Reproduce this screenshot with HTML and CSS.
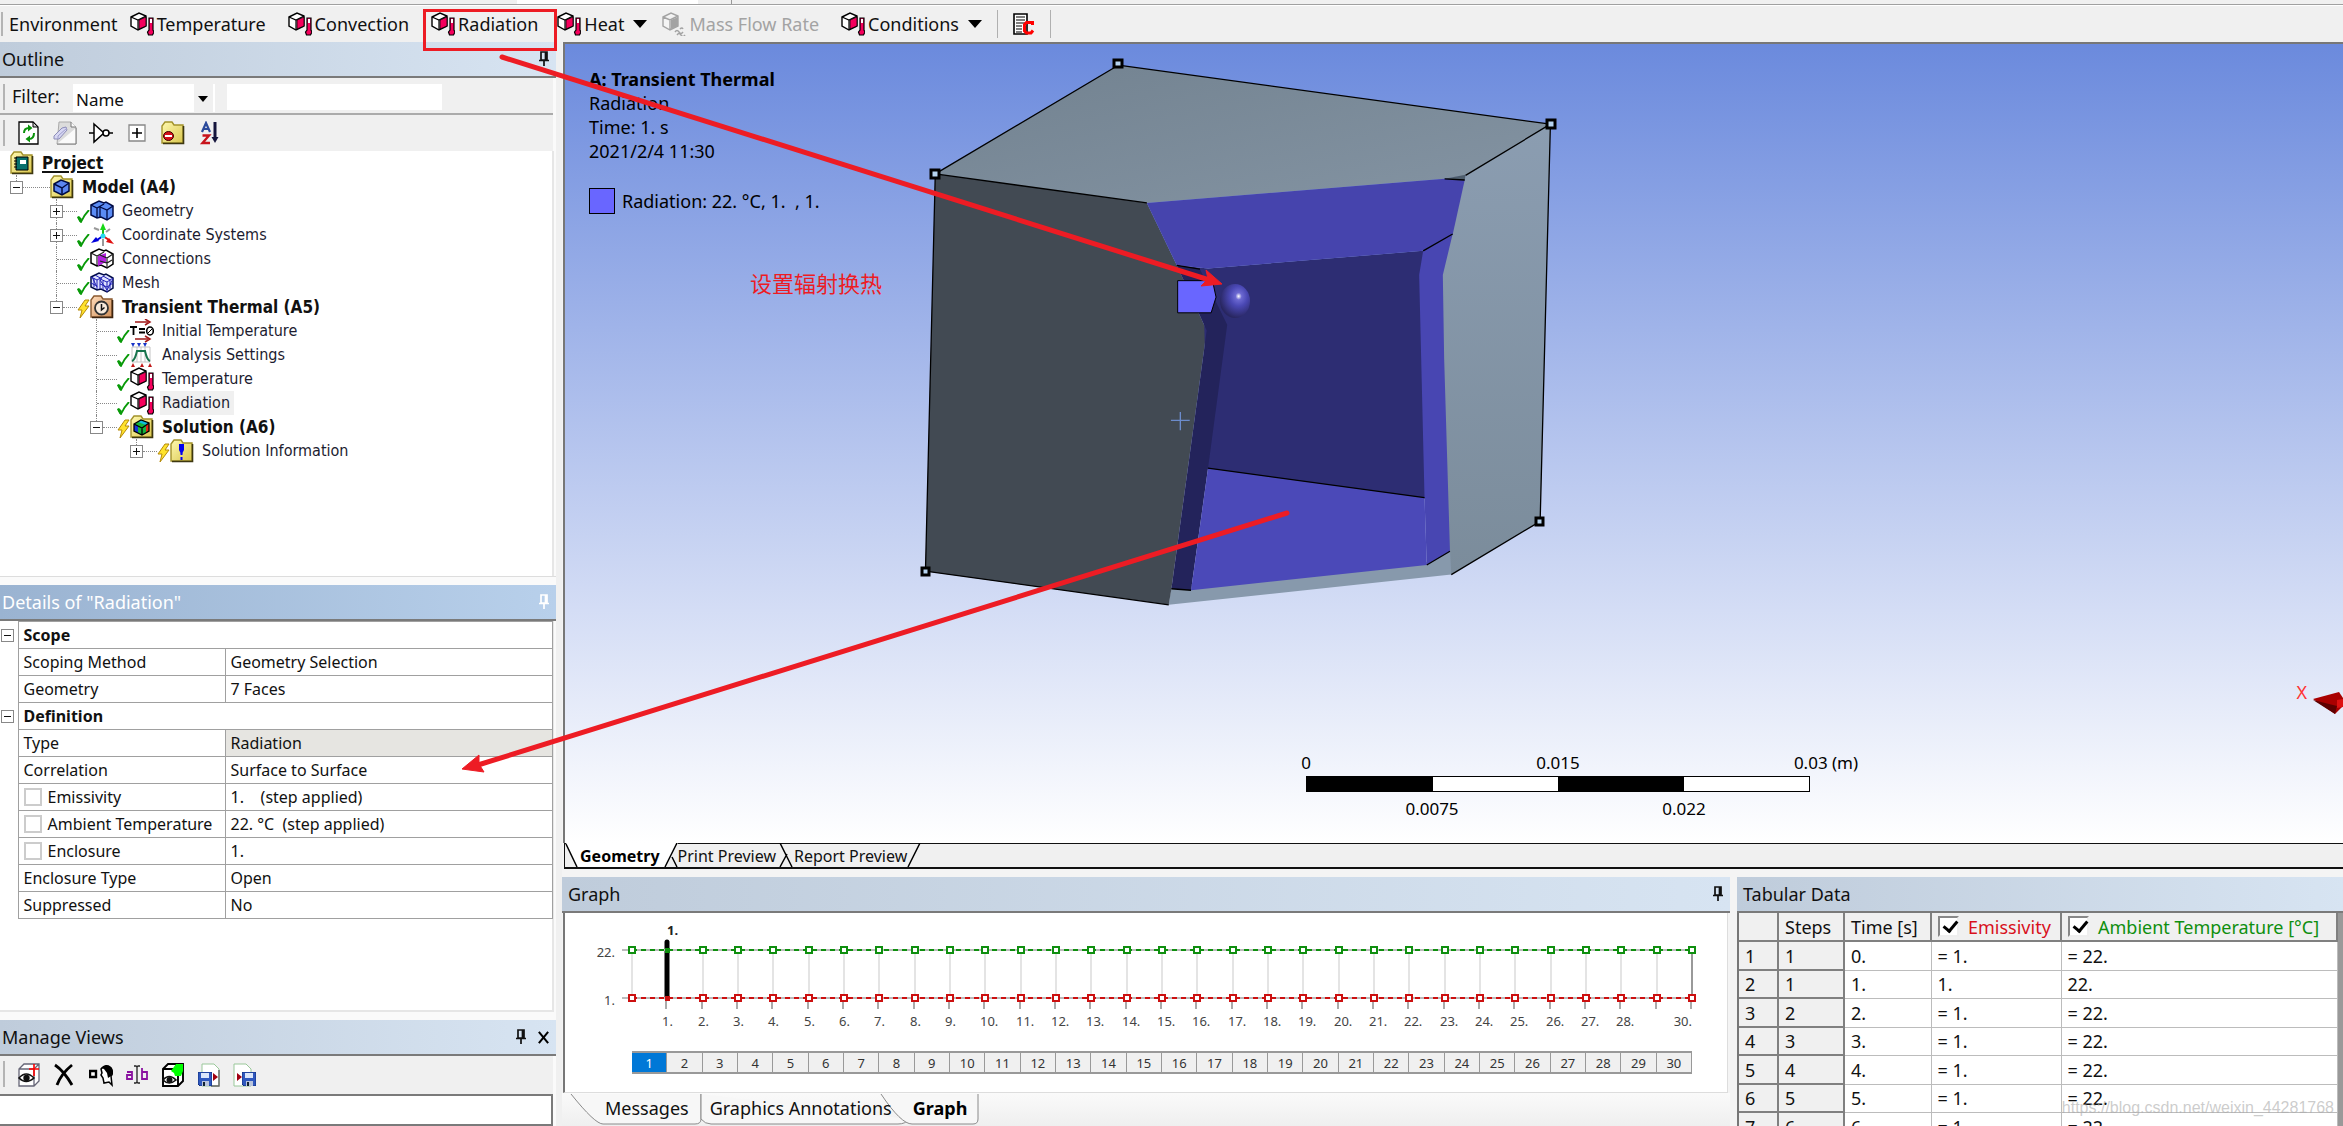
FILE: index.html
```html
<!DOCTYPE html>
<html lang="en">
<head>
<meta charset="utf-8">
<title>Transient Thermal - Mechanical</title>
<link rel="stylesheet" href="styles.css">
</head>
<body>
<svg class="defs" aria-hidden="true">
  <defs>
    <linearGradient id="folderFill" x1="0" y1="0" x2="1" y2="1"><stop offset="0" stop-color="#fff9b0"/><stop offset="1" stop-color="#d9c64e"/></linearGradient>
    <linearGradient id="brownFill" x1="0" y1="0" x2="1" y2="1"><stop offset="0" stop-color="#ffdcbc"/><stop offset="1" stop-color="#d08f58"/></linearGradient>
    <radialGradient id="ball" cx=".62" cy=".36" r=".65"><stop offset="0" stop-color="#fff"/><stop offset=".16" stop-color="#6c69d2"/><stop offset=".45" stop-color="#4a48b4"/><stop offset="1" stop-color="#28265f"/></radialGradient>
    <linearGradient id="topFace" x1="0" y1="0" x2="1" y2="1"><stop offset="0" stop-color="#728290"/><stop offset="1" stop-color="#8494a3"/></linearGradient>
    <linearGradient id="sideFace" x1="0" y1="0" x2="0" y2="1"><stop offset="0" stop-color="#8b9db1"/><stop offset="1" stop-color="#7b8c9b"/></linearGradient>
  </defs>
  <symbol id="thermo" viewBox="0 0 24 24">
    <path d="M1 5 9 1l7 3v10l-8 4-7-4z" fill="#fff" stroke="#000" stroke-width="1.4"/>
    <path d="M1 5l7 3 8-4M8 8v10" fill="none" stroke="#000" stroke-width="1.2"/>
    <path d="M9 8l7-3v9l-7 3z" fill="#f5005c" stroke="#000" stroke-width=".8"/>
    <path d="M19 6h4v12l1 2-1.500 3h-4L17.500 20 19 18z" fill="#f5005c" stroke="#000" stroke-width="1.200"/>
    <path d="M20 7h2v4h-2z" fill="#fff"/>
  </symbol>
  <symbol id="flow" viewBox="0 0 24 24">
    <path d="M1 5 9 1l7 3v10l-8 4-7-4zM1 5l7 3 8-4M8 8v10" fill="#f4f4f4" stroke="#a3a3a3" stroke-width="1.400"/>
    <path d="M9 8l7-3v9l-7 3z" fill="#a3a3a3"/>
    <path d="M13 20q2-3 4 0t4 0M15 23q2-3 4 0t4 0M18 17q2-2 3 0" fill="none" stroke="#a3a3a3" stroke-width="1.400"/>
  </symbol>
  <symbol id="report" viewBox="0 0 24 24">
    <path d="M2 2h13v20H2z" fill="#fff" stroke="#000" stroke-width="1.600"/>
    <path d="M4 5h9M4 8h9M4 11h9M4 14h6M4 17h6M4 20h6" stroke="#000" stroke-width="1.200"/>
    <path d="M20.500 13v-2.500h-6l-2 2V19l2 2h4.500l2-2.500" fill="none" stroke="#f00" stroke-width="3"/>
  </symbol>
  <symbol id="pin" viewBox="0 0 12 16">
    <path d="M3 1h6v8H3zM7.500 1v8M1 9.500h10M6 10v5" fill="none" stroke="currentColor" stroke-width="1.700"/>
  </symbol>
  <symbol id="cross" viewBox="0 0 14 14"><path d="M2 1l10 12M12 1 2 13" stroke="#000" stroke-width="2.200"/></symbol>
  <symbol id="refresh" viewBox="0 0 24 24">
    <path d="M2 1h14l5 5v17H2z" fill="#fff" stroke="#000" stroke-width="1.300"/><path d="M16 1v5h5z" fill="#ccc" stroke="#000"/>
    <path d="M7 12q0-5 5-5M17 12q0 6-5 6" fill="none" stroke="#0a930a" stroke-width="2"/>
    <path d="M11 3.500 15.500 7 11 10.500zM13 14.500 8.500 18l4.500 3.500z" fill="#0a930a"/>
  </symbol>
  <symbol id="eraser" viewBox="0 0 24 24">
    <path d="M6 1h12l5 5v17H4z" fill="#dcdcdc" stroke="#aaa"/><path d="M18 1v5h5M4 23h19V7" fill="#fafafa" stroke="#777"/>
    <path d="M1 15 9 7l4-1 1 3-8 9H1z" fill="#d7d7f3" stroke="#8c8cb8"/><path d="M5 18v-3L14 7" fill="none" stroke="#9d9dcc"/>
  </symbol>
  <symbol id="gate" viewBox="0 0 24 24">
    <path d="M0 12h5M5 3l10 9-10 9zM20 12h4" fill="#fff" stroke="#000" stroke-width="1.500"/><circle cx="17" cy="12" r="3" fill="#fff" stroke="#000" stroke-width="1.500"/>
  </symbol>
  <symbol id="expand" viewBox="0 0 24 24"><path d="M4 4h16v16H4z" fill="#fff" stroke="#888" stroke-width="1.300"/><path d="M7 12h10M12 7v10" stroke="#000" stroke-width="1.600"/></symbol>
  <symbol id="folder" viewBox="0 0 24 24">
    <path d="M1 22V5l3-4h7l2 3h9v18z" fill="url(#folderFill)" stroke="#a3922b" stroke-width="1.400"/><path d="M2 22.500h20.500V5" fill="none" stroke="#3d3710" stroke-width="1.600"/>
  </symbol>
  <symbol id="hidden" viewBox="0 0 24 24"><use href="#folder"/><ellipse cx="7.500" cy="15" rx="5" ry="4.500" fill="#d31018" stroke="#3a0000"/><path d="M4 15h7" stroke="#fff" stroke-width="2"/></symbol>
  <symbol id="sort" viewBox="0 0 24 24">
    <path d="M5 11 9 2l4 9M6.500 8h5" fill="none" stroke="#2b4a9b" stroke-width="2.200"/><path d="M5.500 14.500H12l-6.500 7.500H13" fill="none" stroke="#c8141c" stroke-width="2.400"/>
    <path d="M18 1v17" stroke="#15153c" stroke-width="3"/><path d="M14.500 16h7L18 22z" fill="#15153c"/>
  </symbol>
  <symbol id="project" viewBox="0 0 24 24"><use href="#folder"/><path d="M6 6h12v13H6z" fill="#08706c" stroke="#000"/><path d="M10 9h6v4h-6z" fill="#fff"/><path d="M4 7h3M4 10h3M4 13h3M4 16h3" stroke="#000"/></symbol>
  <symbol id="cube" viewBox="0 0 24 24"><path d="M4 9l7-4 8 3v8l-7 4-8-4z" fill="#5c86f0" stroke="#000c42" stroke-width="1.500"/><path d="M4 9l8 4 7-5M12 13v7" fill="none" stroke="#000c42" stroke-width="1.500"/></symbol>
  <symbol id="model" viewBox="0 0 24 24"><use href="#folder"/><use href="#cube"/></symbol>
  <symbol id="geometry" viewBox="0 0 24 24">
    <path d="M1 6 9 2l5 2 2-1 7 4v10l-6 4-6-3-4 1-6-3z" fill="#5b8cf5" stroke="#000b45" stroke-width="1.500"/>
    <path d="M1 6l6 3 7-4M7 9v9M10 8l7 3 6-4M17 11v10M10 8v10" fill="none" stroke="#000b45" stroke-width="1.300"/>
  </symbol>
  <symbol id="connections" viewBox="0 0 24 24">
    <path d="M1 6 9 2l5 2 2-1 7 4v10l-6 4-6-3-4 1-6-3z" fill="#fff" stroke="#000" stroke-width="1.500"/>
    <path d="M8 9l8-3v9l-8 4z" fill="#b422e0"/><path d="M1 6l6 3 7-4M7 9v9M10 8l7 3 6-4M17 11v10M10 14l7 2 5-3" fill="none" stroke="#222" stroke-width="1.200"/>
  </symbol>
  <symbol id="mesh" viewBox="0 0 24 24">
    <path d="M1 6 9 2l5 2 2-1 7 4v10l-6 4-6-3-4 1-6-3z" fill="#dfe2ff" stroke="#000b45" stroke-width="1.500"/>
    <path d="M1 6l6 3 7-4M7 9v9M10 8l7 3 6-4M17 11v10M10 8v10M1 12l6 3M4 7v9M2 6l5 10M10 9l7 10M23 8l-6 11M13 10v9M20 9v9M10 13l7 3 6-4M5 4l7 4M13 5l7 4" fill="none" stroke="#2020b4"/>
  </symbol>
  <symbol id="axes" viewBox="0 0 24 24">
    <path d="M4 5l5 2M20 6l-4 3M13 16v7" stroke="#999" stroke-width="2"/><path d="M13 14V5" stroke="#18c018" stroke-width="2"/><path d="M13 0l3 7h-6z" fill="#18d818"/>
    <path d="M13 13l-6 4" stroke="#0000dc" stroke-width="2"/><path d="M1 20l5-6 3 4z" fill="#0000dc"/><path d="M13 13l6 4" stroke="#e01010" stroke-width="2"/><path d="M24 21l-8-2 3-4z" fill="#e01010"/><circle cx="13" cy="13" r="2.500" fill="#29d8ee"/>
  </symbol>
  <symbol id="clock" viewBox="0 0 24 24"><path d="M1 22V5l3-4h7l2 3h9v18z" fill="url(#brownFill)" stroke="#8a5a30" stroke-width="1.400"/><path d="M2 22.500h20.500V5" fill="none" stroke="#3d2410" stroke-width="1.600"/><circle cx="11.500" cy="13" r="6.500" fill="#f8eadc" stroke="#333" stroke-width="1.800"/><path d="M11.500 9v6l3-2.500" fill="none" stroke="#111" stroke-width="1.500"/></symbol>
  <symbol id="initial" viewBox="0 0 24 24">
    <path d="M5 3h13M5 20h13" stroke="#a01818" stroke-width="1.500"/><path d="M15 0l5 3-5 3M15 17l5 3-5 3" fill="none" stroke="#a01818" stroke-width="1.500"/>
    <path d="M0 8h7M3.500 8v8M9 10h6M9 13.500h6" stroke="#000" stroke-width="1.800"/><ellipse cx="20" cy="12" rx="3.300" ry="4" fill="none" stroke="#000" stroke-width="1.600"/><path d="M17 15l6-6" stroke="#000"/>
  </symbol>
  <symbol id="settings" viewBox="0 0 24 24">
    <path d="M2 4h18v15H2zM7 4v15M11 4v15M15 4v15" fill="#fff" stroke="#c4c4c4"/><path d="M2 18Q5 17 7 8h8q2 9 5 10" fill="none" stroke="#18744d" stroke-width="2"/>
    <path d="M1 0h4L3 4zM7 0h4L9 4zM13 0h4l-2 4z" fill="#1834c8"/><path d="M1 24h4l-2-4zM10 24h4l-2-4zM18 24h4l-2-4z" fill="#c01818"/>
  </symbol>
  <symbol id="solution" viewBox="0 0 24 24"><use href="#folder"/><path d="M4 9l7-4 8 3v8l-7 4-8-4z" fill="#14b43c"/><path d="M4 9l4 2v7l-4-2z" fill="#1234dc"/><path d="M8 7l3-2 8 3-3 2z" fill="#11bce0"/><path d="M16 10l3-2v8l-3 2z" fill="#e02414"/><path d="M4 9l7-4 8 3v8l-7 4-8-4zM4 9l8 4 7-5M12 13v7" fill="none" stroke="#000" stroke-width="1.300"/></symbol>
  <symbol id="info" viewBox="0 0 24 24"><use href="#folder"/><path d="M9 5h5v6l-2 4h-1l-2-4z" fill="#0000f0"/><path d="M11.500 14v2M11.500 18v3" stroke="#0000f0" stroke-width="2"/></symbol>
  <symbol id="check" viewBox="0 0 13 13"><path d="M1 7l2 4 1 1Q7 5 12 0" fill="none" stroke="#089a08" stroke-width="1.800"/><path d="M0 7l2-1 3 3-1 3H3z" fill="#089a08"/></symbol>
  <symbol id="bolt" viewBox="0 0 13 20"><path d="M8 1h4L8 7h4L3 19l2-8H1z" fill="#ffe32c" stroke="#b58a0a"/></symbol>
  <symbol id="eye" viewBox="0 0 24 24"><path d="M2 6l5-5h15v17l-5 5H2zM2 6h15v17M17 6l5-5" fill="#fff" stroke="#667" stroke-width="1.300"/><path d="M2 15q7-8 15 0-8 7-15 0z" fill="#fff" stroke="#111" stroke-width="1.600"/><circle cx="9.500" cy="15" r="3.200" fill="#111"/><path d="M17 1v12M12 6h10" stroke="#f00" stroke-width="1.600"/></symbol>
  <symbol id="remove" viewBox="0 0 24 24"><path d="M2 2q9 6 17 20M19 2Q8 11 4 22" fill="none" stroke="#000" stroke-width="2.800"/></symbol>
  <symbol id="face" viewBox="0 0 24 24"><path d="M1 8h6v6H1z" fill="#fff" stroke="#000" stroke-width="2.400"/><path d="M12 6q5-6 10-1 3 5 0 8l1 9-3-3-5 1-1-5-2-3 1-2z" fill="#fff" stroke="#000" stroke-width="1.500"/><path d="M12 5q5-5 10-1 3 4 0 9l-3 2-1-5-3-4z" fill="#000"/></symbol>
  <symbol id="rename" viewBox="0 0 24 24"><g fill="none" stroke="#8a12a0" stroke-width="1.800"><path d="M2 9h5v7H2v-4h5M17 5v11h5V9h-5"/></g><path d="M9 3h2q1 0 1 2v13q0 2-1 2H9M15 3h-2q-1 0-1 2v13q0 2 1 2h2" fill="none" stroke="#222" stroke-width="1.300"/></symbol>
  <symbol id="apply" viewBox="0 0 24 24"><path d="M2 6l5-5h15v17l-5 5H2zM2 6h15v17M17 6l5-5" fill="#fff" stroke="#000" stroke-width="1.900"/><path d="M2 17q6-7 13 0-7 6-13 0z" fill="#fff" stroke="#111" stroke-width="1.600"/><circle cx="8.500" cy="17" r="3" fill="#111"/><path d="M10 8l5-7h7v7l-2 5h-6l-1-3z" fill="#0f0"/></symbol>
  <symbol id="disk" viewBox="0 0 14 14"><path d="M0 0h14v14H2l-2-2z" fill="#2f58be" stroke="#123080"/><path d="M3 1h8v5H3z" fill="#dbe6fa"/><path d="M4 9h7v5H4z" fill="#b9c4dc"/><path d="M5 10h2v4H5z" fill="#123"/></symbol>
  <symbol id="export" viewBox="0 0 24 24"><path d="M5 1h12l5 5v17H5z" fill="#fff" stroke="#9ac89a"/><path d="M22 7v16h-8" fill="none" stroke="#666" stroke-width="1.400"/><use href="#disk" x="1" y="9" width="14" height="14"/><path d="M16 10l5 4-5 4z" fill="#a00010"/></symbol>
  <symbol id="import" viewBox="0 0 24 24"><path d="M1 1h12l5 5v17H1z" fill="#fff" stroke="#9ac89a"/><use href="#disk" x="9" y="9" width="14" height="14"/><path d="M4 10l5 4-5 4z" fill="#a00010"/></symbol>
</svg>

<div class="app">
  <div class="strip"><span class="strip-field"></span><span class="strip-end"></span></div>
  <header class="toolbar">
    <span class="toolbar-title">Environment</span>
    <button class="tool"><svg class="icon"><use href="#thermo"/></svg>Temperature</button>
    <button class="tool"><svg class="icon"><use href="#thermo"/></svg>Convection</button>
    <button class="tool tool-tight"><svg class="icon"><use href="#thermo"/></svg>Radiation</button>
    <button class="tool tool-menu"><svg class="icon"><use href="#thermo"/></svg>Heat<span class="caret"></span></button>
    <button class="tool" disabled><svg class="icon"><use href="#flow"/></svg>Mass Flow Rate</button>
    <button class="tool tool-menu"><svg class="icon"><use href="#thermo"/></svg>Conditions<span class="caret"></span></button>
    <span class="tool-group"><button class="icon-button" aria-label="Commands"><svg class="icon"><use href="#report"/></svg></button></span>
  </header>

  <div class="workspace">
    <aside class="sidebar">
      <section class="outline">
        <h2 class="pane-title">Outline<span class="pane-tools"><button class="icon-button" aria-label="Pin outline"><svg class="pin"><use href="#pin"/></svg></button></span></h2>
        <div class="filter">
          <label for="filter-kind">Filter:</label>
          <span class="select-wrap"><select id="filter-kind"><option>Name</option></select></span>
          <input class="filter-text" type="text" aria-label="Filter text">
        </div>
        <div class="mini-toolbar">
          <button class="icon-button" aria-label="Refresh"><svg class="icon"><use href="#refresh"/></svg></button>
          <button class="icon-button" aria-label="Clear"><svg class="icon"><use href="#eraser"/></svg></button>
          <button class="icon-button" aria-label="Connect"><svg class="icon"><use href="#gate"/></svg></button>
          <button class="icon-button" aria-label="Expand all"><svg class="icon"><use href="#expand"/></svg></button>
          <button class="icon-button" aria-label="Hide folders"><svg class="icon"><use href="#hidden"/></svg></button>
          <button class="icon-button" aria-label="Sort"><svg class="icon"><use href="#sort"/></svg></button>
        </div>
        <div class="tree">
          <div class="row root"><svg class="icon"><use href="#project"/></svg><span class="name strong underlined">Project</span></div>
          <ul>
            <li><div class="row"><span class="lane"><button class="toggle minus" aria-label="Collapse"></button><i class="dots"></i></span><svg class="icon"><use href="#model"/></svg><span class="name strong">Model (A4)</span></div>
              <ul>
                <li><div class="row"><span class="lane"><button class="toggle" aria-label="Expand"></button><i class="dots"></i><svg class="check"><use href="#check"/></svg></span><svg class="icon"><use href="#geometry"/></svg><span class="name">Geometry</span></div></li>
                <li><div class="row"><span class="lane"><button class="toggle" aria-label="Expand"></button><i class="dots"></i><svg class="check"><use href="#check"/></svg></span><svg class="icon"><use href="#axes"/></svg><span class="name">Coordinate Systems</span></div></li>
                <li><div class="row"><span class="lane leaf"><i class="dots"></i><svg class="check"><use href="#check"/></svg></span><svg class="icon"><use href="#connections"/></svg><span class="name">Connections</span></div></li>
                <li><div class="row"><span class="lane leaf"><i class="dots"></i><svg class="check"><use href="#check"/></svg></span><svg class="icon"><use href="#mesh"/></svg><span class="name">Mesh</span></div></li>
                <li><div class="row"><span class="lane"><button class="toggle minus" aria-label="Collapse"></button><i class="dots"></i><svg class="bolt"><use href="#bolt"/></svg></span><svg class="icon"><use href="#clock"/></svg><span class="name strong">Transient Thermal (A5)</span></div>
                  <ul>
                    <li><div class="row"><span class="lane leaf"><i class="dots"></i><svg class="check"><use href="#check"/></svg></span><svg class="icon"><use href="#initial"/></svg><span class="name">Initial Temperature</span></div></li>
                    <li><div class="row"><span class="lane leaf"><i class="dots"></i><svg class="check"><use href="#check"/></svg></span><svg class="icon"><use href="#settings"/></svg><span class="name">Analysis Settings</span></div></li>
                    <li><div class="row"><span class="lane leaf"><i class="dots"></i><svg class="check"><use href="#check"/></svg></span><svg class="icon"><use href="#thermo"/></svg><span class="name">Temperature</span></div></li>
                    <li><div class="row"><span class="lane leaf"><i class="dots"></i><svg class="check"><use href="#check"/></svg></span><svg class="icon"><use href="#thermo"/></svg><span class="name selected">Radiation</span></div></li>
                    <li><div class="row"><span class="lane"><button class="toggle minus" aria-label="Collapse"></button><i class="dots"></i><svg class="bolt"><use href="#bolt"/></svg></span><svg class="icon"><use href="#solution"/></svg><span class="name strong">Solution (A6)</span></div>
                      <ul>
                        <li><div class="row"><span class="lane"><button class="toggle" aria-label="Expand"></button><i class="dots"></i><svg class="bolt"><use href="#bolt"/></svg></span><svg class="icon"><use href="#info"/></svg><span class="name">Solution Information</span></div></li>
                      </ul>
                    </li>
                  </ul>
                </li>
              </ul>
            </li>
          </ul>
        </div>
      </section>

      <section class="details">
        <h2 class="pane-title active">Details of "Radiation"<span class="pane-tools"><button class="icon-button" aria-label="Pin details"><svg class="pin"><use href="#pin"/></svg></button></span></h2>
        <div class="details-body">
          <table class="props">
            <colgroup><col class="c-fold"><col class="c-key"><col></colgroup>
            <tr><td class="fold"><button class="toggle minus" aria-label="Collapse"></button></td><th colspan="2">Scope</th></tr>
            <tr><td class="fold"></td><td>Scoping Method</td><td>Geometry Selection</td></tr>
            <tr><td class="fold"></td><td>Geometry</td><td>7 Faces</td></tr>
            <tr><td class="fold"><button class="toggle minus" aria-label="Collapse"></button></td><th colspan="2">Definition</th></tr>
            <tr><td class="fold"></td><td>Type</td><td class="locked">Radiation</td></tr>
            <tr><td class="fold"></td><td>Correlation</td><td>Surface to Surface</td></tr>
            <tr><td class="fold"></td><td><label class="param"><input type="checkbox">Emissivity</label></td><td class="spaced">1.    (step applied)</td></tr>
            <tr><td class="fold"></td><td><label class="param"><input type="checkbox">Ambient Temperature</label></td><td class="spaced">22. °C  (step applied)</td></tr>
            <tr><td class="fold"></td><td><label class="param"><input type="checkbox">Enclosure</label></td><td>1.</td></tr>
            <tr><td class="fold"></td><td>Enclosure Type</td><td>Open</td></tr>
            <tr><td class="fold"></td><td>Suppressed</td><td>No</td></tr>
          </table>
        </div>
      </section>

      <section class="views">
        <h2 class="pane-title">Manage Views<span class="pane-tools"><button class="icon-button" aria-label="Pin views"><svg class="pin"><use href="#pin"/></svg></button><button class="icon-button" aria-label="Close views"><svg class="cross"><use href="#cross"/></svg></button></span></h2>
        <div class="mini-toolbar">
          <button class="icon-button" aria-label="Create view"><svg class="icon"><use href="#eye"/></svg></button>
          <button class="icon-button" aria-label="Delete view"><svg class="icon"><use href="#remove"/></svg></button>
          <button class="icon-button" aria-label="Apply view"><svg class="icon"><use href="#face"/></svg></button>
          <button class="icon-button" aria-label="Rename view"><svg class="icon"><use href="#rename"/></svg></button>
          <button class="icon-button" aria-label="Replace view"><svg class="icon"><use href="#apply"/></svg></button>
          <button class="icon-button" aria-label="Export views"><svg class="icon"><use href="#export"/></svg></button>
          <button class="icon-button" aria-label="Import views"><svg class="icon"><use href="#import"/></svg></button>
        </div>
        <div class="views-list"></div>
      </section>
    </aside>

    <main class="main">
      <section class="viewport">
        <svg class="scene" viewBox="565 44 1778 799" aria-hidden="true">
          <g transform="translate(900 30) scale(.4464 .3827)" stroke-linejoin="round">
            <path fill="url(#topFace)" d="M489 92 1457 246 1267 380 1220 389 553 452 79 376z"/>
            <path fill="url(#sideFace)" d="M1267 380 1457 246 1434 1284 1235 1423 1200 1400 1200 640z"/>
            <path fill="#8799ac" d="M602 1502 608 1455 1180 1390 1232 1355 1235 1423z"/>
            <path fill="#424a53" d="M79 376 553 452 620 615 687 785 608 1460 602 1502 57 1414z"/>
            <path fill="#2d2d73" d="M620 615 690 623 1172 577 1178 1225 690 1147 680 700z"/>
            <path fill="#4644ad" d="M553 452 1220 389 1265 392 1238 535 1172 577 690 623 620 615z"/>
            <path fill="#23235b" d="M620 615 672 625 733 770 690 1145 652 1464 608 1460 687 785z"/>
            <path fill="#4b49b8" d="M690 1145 1175 1222 1180 1398 652 1464z"/>
            <path fill="#4846b2" d="M1238 533 1216 640 1219 860 1232 1362 1180 1398 1175 1222 1163 640 1172 577z"/>
            <path fill="#4d5c6b" d="M1220 389 1267 378 1265 393z"/>
            <g fill="none" stroke="#000" stroke-width="1.300">
              <path vector-effect="non-scaling-stroke" d="M553 452 79 376 489 92 1457 246 1267 380M79 376 57 1414 602 1502M1457 246 1434 1284 1235 1423M1172 577l66-44M690 1145l485 77M1180 1398l52-36M608 1460l44 4M620 615l52 10M1220 389l45 3"/>
            </g>
            <path d="M607 1020h42M628 998v48" stroke="#6c8ccc" stroke-width="3"/>
            <path vector-effect="non-scaling-stroke" d="M622 655h78l8 43-11 41h-75z" fill="#6966ff" stroke="#000"/>
          </g>
          <ellipse cx="1235" cy="301" rx="15" ry="17" fill="url(#ball)"/>
          <g fill="#b6d3ef" stroke="#000" stroke-width="3"><path d="M1114 60h8v7h-8zM1547 120h8v8h-8zM931 170h8v8h-8zM922 568h7v7h-7zM1536 518h7v7h-7z"/></g>
        </svg>
        <div class="caption">
          <strong>A: Transient Thermal</strong>
          <span>Radiation</span>
          <span>Time: 1. s</span>
          <span>2021/2/4 11:30</span>
          <span class="legend"><i class="swatch"></i>Radiation: 22. °C, 1.&nbsp; , 1.</span>
        </div>
        <div class="ruler">
          <div class="ruler-top"><span>0</span><span>0.015</span><span>0.03 (m)</span></div>
          <div class="ruler-bar"><i></i><i></i><i></i><i></i></div>
          <div class="ruler-bottom"><span>0.0075</span><span>0.022</span></div>
        </div>
        <div class="triad"><span>X</span><svg viewBox="0 0 30 22"><path d="M0 7 26 0 30 6v8l-8 8z" fill="#a90000"/><path d="M0 8 24 14 22 22z" fill="#5d0000"/><path d="M24 8l6-1v8l-6 1z" fill="#d11" /></svg></div>
      </section>
      <nav class="sheet-tabs">
        <svg class="tab-lines" width="360" height="25" aria-hidden="true"><path d="M1 0h112L101 24H13z" fill="#fff"/><path d="M1 1l11 23M100 24 112 0M107 14l5 10M215 24l7-13M215 0l12 24M343 24 355 0" fill="none" stroke="#000" stroke-width="1.500"/></svg>
        <a href="#geometry-view" class="current">Geometry</a><a href="#print-view">Print Preview</a><a href="#report-view">Report Preview</a>
      </nav>

      <div class="bottom">
        <section class="graph">
          <h2 class="pane-title">Graph<span class="pane-tools"><button class="icon-button" aria-label="Pin graph"><svg class="pin"><use href="#pin"/></svg></button></span></h2>
          <div class="graph-body">
            <svg class="plot" id="plot"></svg>
            <div class="steps" id="steps"></div>
          </div>
          <nav class="dock-tabs">
            <svg class="tab-lines" width="440" height="33" aria-hidden="true"><g fill="#f7f7f7" stroke="#8a8a8a"><path d="M9 1q24 30 32 30h92q6 0 6-5V1"/><path d="M139 1v25q4 5 10 5h187q8 0 10-5"/><path d="M319 1q20 30 31 30h61q5 0 5-5V1"/></g></svg>
            <a href="#messages">Messages</a><a href="#annotations">Graphics Annotations</a><a href="#graph" class="current">Graph</a>
          </nav>
        </section>

        <section class="tabular">
          <h2 class="pane-title">Tabular Data</h2>
          <div class="tabular-body">
            <table class="data">
              <colgroup><col class="d-row"><col class="d-step"><col class="d-time"><col class="d-emis"><col class="d-temp"></colgroup>
              <thead><tr><th></th><th>Steps</th><th>Time [s]</th><th><label class="series red"><input type="checkbox" checked>Emissivity</label></th><th><label class="series green"><input type="checkbox" checked>Ambient Temperature [°C]</label></th></tr></thead>
              <tbody>
                <tr><th>1</th><th>1</th><td>0.</td><td>= 1.</td><td>= 22.</td></tr>
                <tr><th>2</th><th>1</th><td>1.</td><td>1.</td><td>22.</td></tr>
                <tr><th>3</th><th>2</th><td>2.</td><td>= 1.</td><td>= 22.</td></tr>
                <tr><th>4</th><th>3</th><td>3.</td><td>= 1.</td><td>= 22.</td></tr>
                <tr><th>5</th><th>4</th><td>4.</td><td>= 1.</td><td>= 22.</td></tr>
                <tr><th>6</th><th>5</th><td>5.</td><td>= 1.</td><td>= 22.</td></tr>
                <tr><th>7</th><th>6</th><td>6.</td><td>= 1.</td><td>= 22.</td></tr>
              </tbody>
            </table>
          </div>
          <span class="watermark">https://blog.csdn.net/weixin_44281768</span>
        </section>
      </div>
    </main>
  </div>

  <svg class="markup" width="1300" height="800" aria-hidden="true">
    <g fill="none" stroke="#ed1c24"><path d="M424.500 10.500h131v39h-131z" stroke-width="3"/><path d="M502 57 1206 279M1287 513 478 765" stroke-width="5" stroke-linecap="round"/></g>
    <path d="M1222 284 1206 270 1208 279 1201 286zM462 769 479 755 479 764 484 772z" fill="#ed1c24" stroke="#ed1c24"/>
  </svg>
  <span class="note" lang="zh">设置辐射换热</span>
</div>
<script src="graph.js"></script>
</body>
</html>
```
FILE: styles.css
```css
* { box-sizing: border-box; }

body {
  margin: 0;
  background: #f0f0f0;
  color: #111;
  font: 18px/24px "Noto Sans", "Noto Sans CJK SC", sans-serif;
}

button, input, select { font: inherit; color: inherit; }
button { border: 0; padding: 0; background: none; }
a { color: inherit; text-decoration: none; }
h2, ul { margin: 0; padding: 0; }
ul { list-style: none; }
.defs { position: absolute; width: 0; height: 0; }
.icon { width: 24px; height: 24px; flex: none; display: block; }

.app {
  position: relative;
  display: flex;
  flex-direction: column;
  height: 100vh;
  overflow: hidden;
}

/* top strip and toolbar */
.strip { display: flex; height: 5px; border-bottom: 1px solid #a0a0a0; padding-left: 517px; }
.strip-field { width: 181px; background: #fff; }
.strip-end { width: 34px; border-right: 1px solid #999; }

.toolbar {
  display: flex;
  align-items: center;
  height: 37px;
  border-top: 1px solid #fff;
  gap: 22px;
  padding-left: 1px;
  white-space: nowrap;
}
.toolbar-title { border-left: 2px solid #b4b4b4; padding-left: 6px; margin-right: -10px; }
.tool { display: flex; align-items: center; gap: 3px; }
.tool:disabled { color: #a3a3a3; }
.tool-tight { margin-right: -3px; }
.tool-menu { margin-right: -7px; }
.caret { border: 7px solid transparent; border-top: 8px solid #000; border-bottom: 0; margin-left: 6px; }
.tool-group { border: 1px solid #b0b0b0; border-width: 0 1px; padding: 2px 14px; }
.icon-button { display: block; flex: none; }

.workspace { flex: 1; min-height: 0; display: flex; gap: 6px; }
.sidebar { width: 556px; flex: none; display: flex; flex-direction: column; gap: 8px; background: #fafafa; }
.main { flex: 1; min-width: 0; display: flex; flex-direction: column; background: #f4f4f4; }

.pane-title {
  display: flex;
  align-items: center;
  justify-content: space-between;
  flex: none;
  height: 36px;
  padding: 0 6px 0 2px;
  font-size: 18px;
  font-weight: 400;
  line-height: 32px;
  background: linear-gradient(90deg, #bfccdb, #d7e4f2);
  border-bottom: 2px solid #7a7a7a;
}
.pane-title.active { color: #fff; background: linear-gradient(90deg, #9ab3d1, #b8d0eb); }
.pane-tools { display: flex; align-items: center; gap: 10px; }
.pin { width: 12px; height: 16px; display: block; }
.cross { width: 13px; height: 13px; display: block; }

/* outline */
.outline { border-bottom: 1px solid #ddd; }
.filter {
  display: flex;
  height: 37px;
  width: 553px;
  padding: 6px 0 0 3px;
  background: #f0f0f0;
  border-bottom: 2px solid #ababab;
}
.filter label { border-left: 2px solid #b4b4b4; padding-left: 7px; width: 70px; height: 26px; line-height: 24px; }
.select-wrap { position: relative; width: 142px; height: 28px; background: #fff; border-right: 2px solid #fff; }
.select-wrap::after {
  content: "";
  position: absolute;
  top: 12px;
  right: 5px;
  border: 5px solid transparent;
  border-top: 6px solid #000;
  border-bottom: 0;
}
.select-wrap select {
  appearance: none;
  width: 100%;
  height: 28px;
  padding: 3px 3px 0;
  border: 0;
  border-radius: 0;
  font-size: 17px;
  line-height: 24px;
  background: linear-gradient(90deg, #fff 121px, #f0f0f0 121px);
}
.filter-text { width: 215px; height: 26px; margin-left: 12px; padding: 0 4px; border: 0; background: #fff; }

.mini-toolbar {
  display: flex;
  align-items: center;
  gap: 12px;
  height: 36px;
  width: 553px;
  padding-left: 17px;
  background: linear-gradient(#b4b4b4, #b4b4b4) 3px 5px / 2px 26px no-repeat #f0f0f0;
}

.tree { width: 554px; height: 425px; background: #fff; border-right: 2px solid #e6e6e6; overflow: hidden; color: #1c1c30; }
.tree ul ul { margin-left: 40px; }
.tree li { position: relative; }
.tree li::before { content: ""; position: absolute; left: 16px; top: 0; height: 100%; border-left: 1px dotted #888; }
.tree li:last-child::before { height: 12px; }
.row { display: flex; align-items: center; height: 24px; font: 16px/24px "DejaVu Sans Condensed", "DejaVu Sans", sans-serif; white-space: nowrap; }
.root { padding-left: 10px; }
.lane { display: flex; align-items: center; width: 50px; height: 24px; padding-left: 10px; flex: none; }
.leaf { padding-left: 17px; }
.dots { flex: 1; border-top: 1px dotted #888; }
.toggle { position: relative; width: 13px; height: 13px; flex: none; border: 1px solid #888; background: linear-gradient(#111, #111) center / 7px 1px no-repeat, linear-gradient(#111, #111) center / 1px 7px no-repeat #fff; }
.toggle.minus { background: linear-gradient(#111, #111) center / 7px 1px no-repeat #fff; }
.check { width: 13px; height: 13px; align-self: flex-end; flex: none; }
.bolt { width: 13px; height: 20px; align-self: flex-end; flex: none; }
.name { padding: 0 4px 0 2px; margin-left: 6px; height: 24px; }
.strong { font-size: 17px; font-weight: 700; color: #111; }
.underlined { text-decoration: underline; text-decoration-thickness: 2px; text-underline-offset: 2px; }
.selected { background: #f0f0f0; }

/* details */
.details { flex: 1; min-height: 0; display: flex; flex-direction: column; }
.details-body { flex: 1; width: 554px; background: #fff; border: solid #e6e6e6; border-width: 0 2px 2px 0; }
.props { width: 553px; border-collapse: collapse; table-layout: fixed; font-size: 16px; line-height: 22px; }
.c-fold { width: 18px; }
.c-key { width: 207px; }
.props tr { height: 27px; }
.props td, .props th { border: 1px solid #a0a0a0; padding: 0 5px 1px; text-align: left; white-space: nowrap; }
.props .fold { border-width: 0 1px 0 0; padding: 0 0 0 1px; }
.props .toggle { display: block; }
.props .locked { background: #e6e5e1; }
.props .spaced { white-space: pre; }
.param { display: flex; align-items: center; gap: 6px; }
.param input { appearance: none; width: 18px; height: 18px; margin: 0; border: 2px solid #ccc; background: #fff; }

/* manage views */
.views { flex: none; }
.views .mini-toolbar { height: 38px; }
.views-list { width: 553px; height: 32px; background: #fff; border: solid #7a7a7a; border-width: 2px 2px 2px 0; }

/* 3D viewport */
.viewport {
  position: relative;
  flex: 1;
  min-height: 0;
  margin-left: 1px;
  border: solid #777;
  border-width: 2px 0 0 2px;
  background: linear-gradient(#6b8add, #fff);
  overflow: hidden;
}
.scene { position: absolute; left: 0; top: 0; width: 1778px; height: 799px; }
.caption { position: absolute; left: 24px; top: 23px; display: flex; flex-direction: column; color: #000; }
.legend { display: flex; align-items: center; gap: 7px; margin-top: 25px; }
.swatch { width: 26px; height: 26px; background: #6966ff; border: 1px solid #000; }
.ruler { position: absolute; left: 741px; bottom: 22px; width: 504px; font-size: 17px; color: #000; }
.ruler-top, .ruler-bottom { display: grid; justify-items: center; white-space: nowrap; }
.ruler-top { grid-template-columns: 0 1fr 0; }
.ruler-top span:last-child { padding-left: 32px; }
.ruler-bottom { grid-template-columns: 1fr 1fr; padding-top: 4px; }
.ruler-bar { display: grid; grid-template-columns: repeat(4, 1fr); height: 16px; border: 1px solid #000; background: #fff; margin: 1px 0; }
.ruler-bar i:nth-child(odd) { background: #000; }
.triad { position: absolute; right: 0; top: 636px; display: flex; gap: 6px; color: #f33; line-height: 24px; }
.triad svg { width: 30px; height: 22px; margin-top: 12px; }

.sheet-tabs {
  position: relative;
  flex: none;
  display: flex;
  gap: 18px;
  height: 26px;
  margin-left: 2px;
  padding-left: 15px;
  border: solid #111;
  border-width: 1px 0 2px 1px;
  background: #f0f0f0;
  font-size: 16px;
  line-height: 24px;
  white-space: nowrap;
}
.sheet-tabs a, .dock-tabs a { position: relative; }
.tab-lines { position: absolute; left: 0; top: 0; }
.sheet-tabs .tab-lines { top: -1px; }
.current { font-weight: 700; color: #000; }

.bottom { flex: none; display: grid; grid-template-columns: 1168fr 606fr; gap: 7px; height: 257px; padding-top: 8px; }
.bottom .pane-title { padding-left: 6px; }

/* graph */
.graph { display: flex; flex-direction: column; min-width: 0; }
.graph-body { flex: 1; margin: 0 2px 0 1px; border: solid #777; border-width: 0 1px 1px 2px; border-right-color: #ddd; border-bottom-color: #ddd; background: #fff; }
.plot { display: block; width: 100%; height: 138px; font-size: 13px; }
.steps { display: grid; grid-template-columns: repeat(30, 1fr); margin: 0 35px 0 67px; height: 23px; border: solid #999; border-width: 2px 1px 2px 0; background: #999; column-gap: 1px; }
.steps button { background: #f0f0f0; font-size: 13px; line-height: 18px; color: #333; }
.steps .on { background: #0078d7; color: #fff; }
.dock-tabs { position: relative; display: flex; gap: 21px; height: 33px; padding: 3px 0 0 43px; background: linear-gradient(#fafafa, #efefef); white-space: nowrap; }

/* tabular data */
.tabular { position: relative; overflow: hidden; }
.tabular-body { border-left: 2px solid #777; background: #999; height: 220px; overflow: hidden; }
.data { width: calc(100% - 5px); border-collapse: collapse; table-layout: fixed; line-height: 24px; background: #fff; }
.d-row { width: 39px; }
.d-step { width: 66px; }
.d-time { width: 87px; }
.d-emis { width: 130px; }
.data tr { height: 28px; }
.data tbody tr:nth-child(odd) { height: 29px; }
.data th, .data td { padding: 0 0 0 6px; text-align: left; font-weight: 400; border: 1px solid #bcbcbc; white-space: nowrap; }
.data th { background: #f0f0f0; border: 1px solid #808080; border-width: 0 2px 2px 0; }
.series { display: flex; align-items: center; gap: 9px; }
.series input { appearance: none; width: 21px; height: 21px; margin: 0; border: 2px solid #888; border-right-color: #eee; border-bottom-color: #eee; background: #fff; }
.series input:checked::before { content: ""; display: block; width: 6px; height: 11px; margin: 0 0 0 6px; border: solid #000; border-width: 0 3px 3px 0; transform: rotate(40deg); }
.red { color: #d8101c; }
.green { color: #0f8f0f; }
.watermark { position: absolute; right: 9px; bottom: 6px; font: 16px/24px "Liberation Sans", sans-serif; color: rgba(170, 170, 170, .6); }

/* red annotations drawn across panes */
.markup { position: absolute; left: 0; top: 0; pointer-events: none; }
.note { position: absolute; left: 750px; top: 268px; font: 22px/28px "Noto Sans CJK SC", sans-serif; color: #ed1c24; }
```
FILE: graph.js
```js
const NS = "http://www.w3.org/2000/svg";
const plot = document.getElementById("plot");
const steps = document.getElementById("steps");
const COUNT = 30, LEFT = 67, RIGHT = 35, GREEN_Y = 37, RED_Y = 85;

function add(name, attrs, text) {
  const el = document.createElementNS(NS, name);
  for (const key in attrs) el.setAttribute(key, attrs[key]);
  if (text) el.textContent = text;
  plot.append(el);
}

function line(x1, y1, x2, y2, stroke, extra) {
  add("line", { x1, y1, x2, y2, stroke, ...extra });
}

function draw() {
  plot.replaceChildren();
  const span = plot.clientWidth - LEFT - RIGHT;
  const at = i => Math.round(LEFT + span * i / COUNT);
  for (let i = 0; i <= COUNT; i++) {
    line(at(i), GREEN_Y, at(i), RED_Y, i === COUNT ? "#999" : "#e4e4e4", { "stroke-width": 2 });
    if (i) line(at(i) - 1, RED_Y, at(i) - 1, RED_Y + 11, "#aaa", { "stroke-width": 2 });
    if (i && i !== 29) {
      const last = i === COUNT;
      add("text", { x: at(i) - (last ? 0 : 5), y: 113, fill: "#444", "text-anchor": last ? "end" : "start" }, i + ".");
    }
  }
  line(at(1), 29, at(1), RED_Y, "#000", { "stroke-width": 5, "stroke-linecap": "round" });
  for (const [y, color] of [[GREEN_Y, "#0f8f0f"], [RED_Y, "#cc1010"]]) {
    line(at(0) - 10, y, at(COUNT), y, "#bbb", { "stroke-width": 2 });
    line(at(0), y, at(COUNT), y, color, { "stroke-width": 2, "stroke-dasharray": "5 4" });
    for (let i = 0; i <= COUNT; i++) {
      if (i === 1) add("rect", { x: at(i) - 2, y: y - 2, width: 5, height: 5, fill: color });
      else add("rect", { x: at(i) - 3, y: y - 3, width: 6, height: 6, fill: "#fff", stroke: color, "stroke-width": 2 });
    }
  }
  add("text", { x: at(0) - 17, y: GREEN_Y + 7, fill: "#444", "text-anchor": "end" }, "22.");
  add("text", { x: at(0) - 17, y: RED_Y + 7, fill: "#444", "text-anchor": "end" }, "1.");
  add("text", { x: at(1), y: 22, fill: "#222", "font-weight": 700 }, "1.");
}

for (let i = 1; i <= COUNT; i++) {
  const cell = document.createElement("button");
  cell.textContent = i;
  if (i === 1) cell.className = "on";
  steps.append(cell);
}
draw();
window.addEventListener("resize", draw);
```
